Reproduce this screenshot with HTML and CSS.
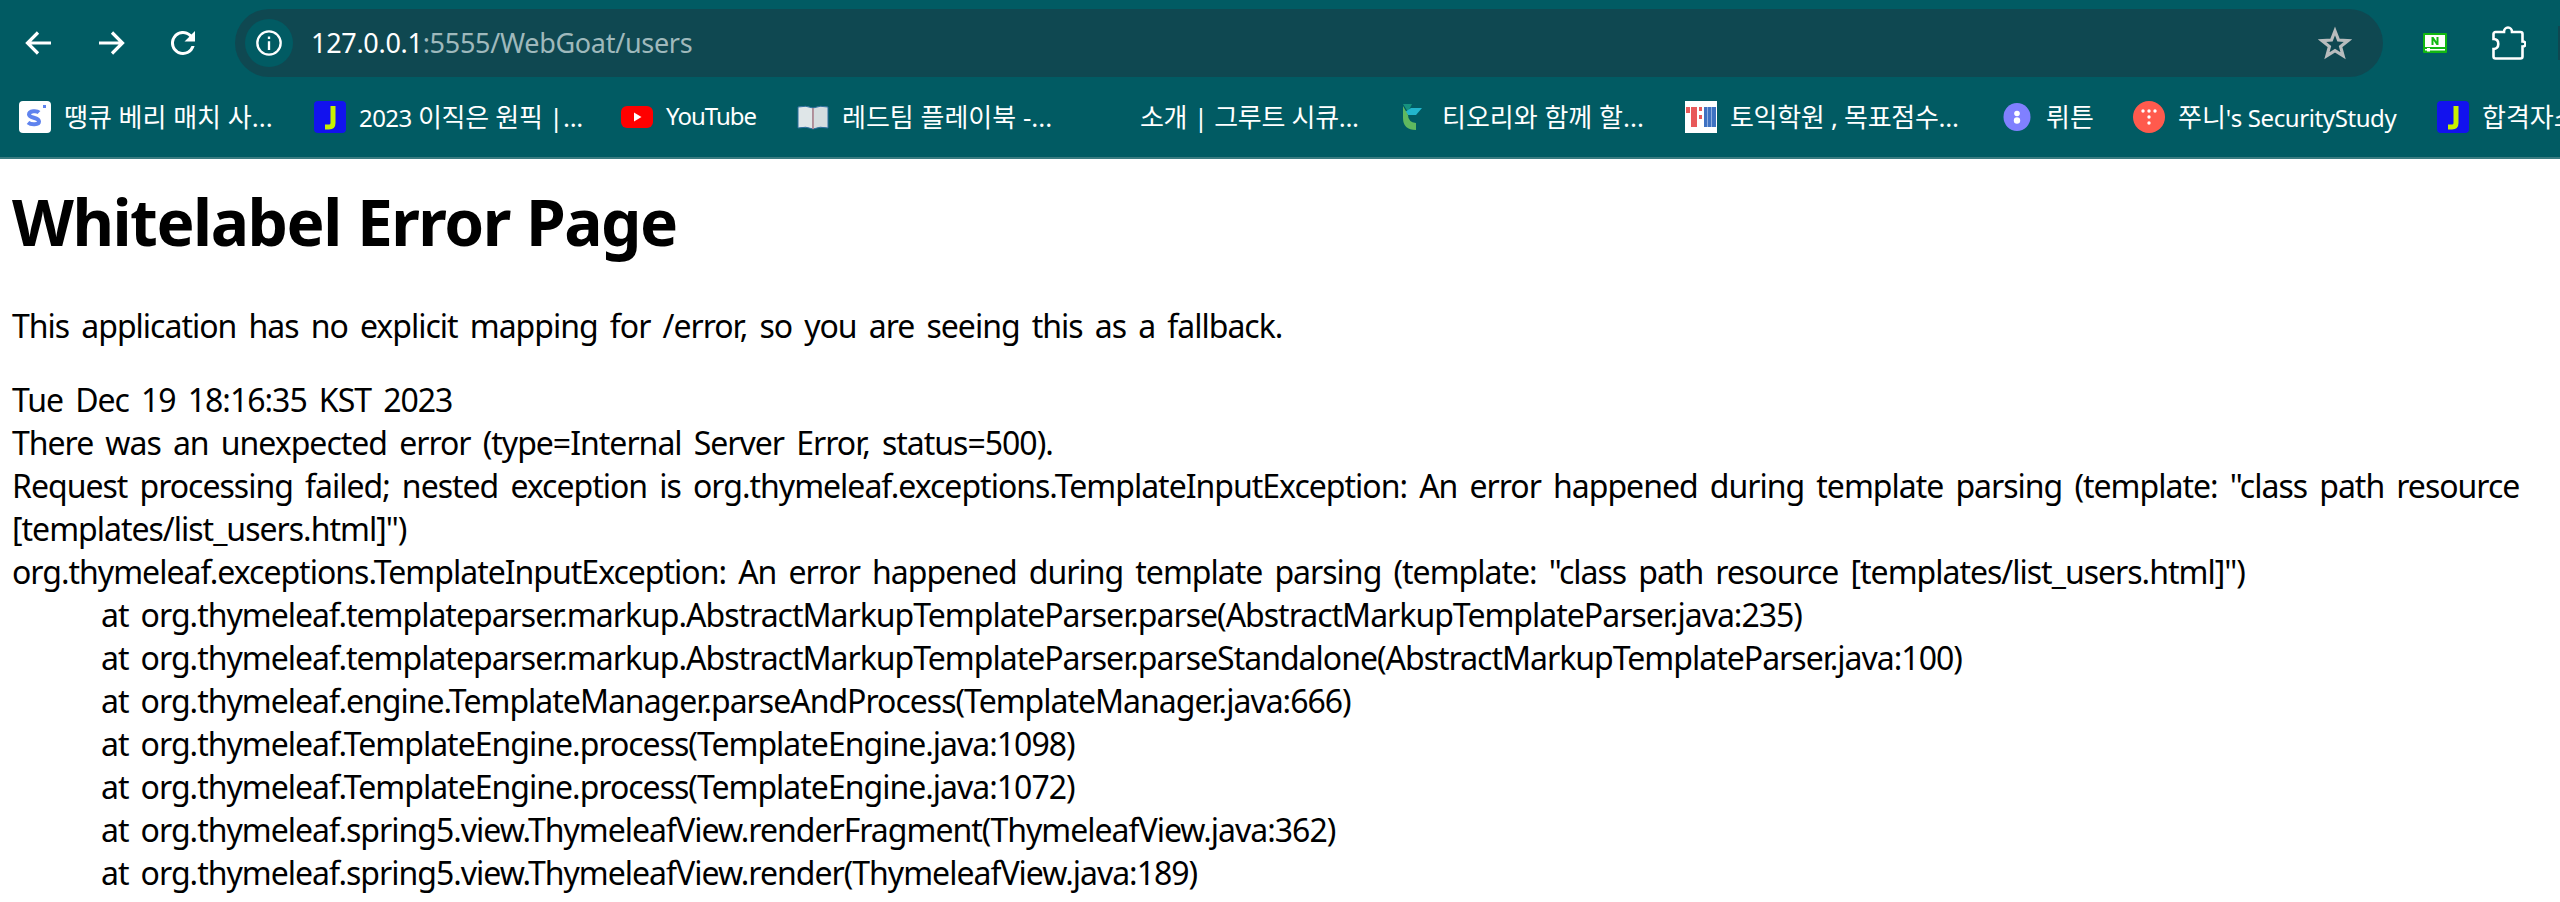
FILE: index.html
```html
<!DOCTYPE html>
<html lang="ko">
<head>
<meta charset="utf-8">
<title>WebGoat users</title>
<link rel="stylesheet" href="styles.css">
</head>
<body>
<header class="chrome">
  <div class="toolbar">
    <div class="nav">
      <svg class="nav-icon" viewBox="0 0 36 36"><path d="M30 18H7M17 7.500L6.500 18 17 28.500" class="nav-stroke"/></svg>
      <svg class="nav-icon" viewBox="0 0 36 36"><path d="M6 18h23M19 7.500L29.500 18 19 28.500" class="nav-stroke"/></svg>
      <svg class="nav-icon reload" viewBox="0 0 24 24"><path d="M17.65 6.350A8 8 0 1 0 19.730 14h-2.080A6 6 0 1 1 12 6c1.660 0 3.140.69 4.220 1.780L13 11h7V4z"/></svg>
    </div>
    <div class="omnibox">
      <span class="site-info"><svg viewBox="0 0 24 24" class="info-icon"><circle cx="12" cy="12" r="10" fill="none" stroke="#fff" stroke-width="2"/><path d="M11 10.500h2V18h-2zM11 6.500h2v2h-2z" fill="#fff"/></svg></span>
      <span class="url"><span class="host">127.0.0.1</span>:5555/WebGoat/users</span>
      <svg class="star" viewBox="0 0 34 34"><path d="M17 5l3.500 9 9.500.6-7.400 6 2.500 9.200L17 24.700l-8.100 5.100 2.500-9.200-7.400-6 9.500-.6z" fill="none" stroke="#b8bcbd" stroke-width="3.200"/></svg>
    </div>
    <svg class="ext-naver" viewBox="0 0 24 20"><rect width="24" height="20" rx="1" fill="#12b812"/><rect x="2" y="2" width="20" height="12" fill="#fff"/><path d="M8.500 12V4h2l3 4.500V4h2v8h-2l-3-4.500V12z" fill="#12b812"/><rect x="2" y="16" width="20" height="1.500" fill="#fff"/><rect x="4" y="15" width="3" height="3.500" fill="#fff"/></svg>
    <svg class="ext-puzzle" viewBox="0 0 34 34"><path d="M3.500 32.500a2 2 0 0 1-2-2v-7.500c3 0 4.800-2 4.800-5S4.500 13 1.500 13V8a2 2 0 0 1 2-2h8.500c0-2.600 1.800-4.500 4-4.500s4 1.900 4 4.500h8.500a2 2 0 0 1 2 2v7.500c2 0 3 1 3 2.500s-1 2.500-3 2.500v10a2 2 0 0 1-2 2z" fill="none" stroke="#fff" stroke-width="2.600"/></svg>
    <span class="avatar-edge"></span>
  </div>
  <nav class="bookmarks">
    <a class="bm"><svg class="fav" viewBox="0 0 32 32"><rect width="32" height="32" rx="4" fill="#fff"/><path d="M20 11.500c-2-2-10-2-10 2 0 4 10 2.500 10 7 0 3.500-8 3.500-11 1" fill="none" stroke="#5f83ee" stroke-width="4"/><rect x="24" y="4" width="3" height="3" fill="#5f83ee"/></svg><span class="label">땡큐 베리 매치 사...</span></a>
    <a class="bm"><svg class="fav" viewBox="0 0 32 32"><rect width="32" height="32" rx="4" fill="#1212ee"/><path d="M19 5v17q0 4-4 4h-4" fill="none" stroke="#c8f000" stroke-width="5"/></svg><span class="label tight"><span class="digits">2023</span> 이직은 원픽 |...</span></a>
    <a class="bm"><svg class="fav" viewBox="0 0 32 32"><rect y="5" width="32" height="22" rx="6" fill="#f00"/><path d="M13 11.500l7.500 4.500-7.500 4.500z" fill="#fff"/></svg><span class="label latin">YouTube</span></a>
    <a class="bm"><svg class="fav" viewBox="0 0 32 32"><path d="M1 6q8-2 15 1v21q-7-3-15-1z" fill="#dfe6e8" stroke="#2d6f9e"/><path d="M31 6q-8-2-15 1v21q7-3 15-1z" fill="#d4dcdf" stroke="#2d6f9e"/><path d="M16 7v21" stroke="#c78e92" stroke-width="1.500"/></svg><span class="label">레드팀 플레이북 -...</span></a>
    <a class="bm"><span class="fav"></span><span class="label tight">소개 | 그루트 시큐...</span></a>
    <a class="bm"><svg class="fav" viewBox="0 0 32 32"><path d="M6 3l9 0 -4 8z" fill="#16927f"/><path d="M8 11l6-4h11l-6 7h-8z" fill="#22b5cc"/><path d="M6 5l5 9q0 7 8 8v7q-13 0-13-12z" fill="#5fb85f"/></svg><span class="label">티오리와 함께 할...</span></a>
    <a class="bm"><svg class="fav" viewBox="0 0 32 32"><rect width="32" height="32" fill="#fff"/><path d="M1 6h4v6H1zM6 6h6v20H6zM14 6h3v4h-3zM14 14h3v4h-3z" fill="#e8595a"/><path d="M19 6h12v20H19z" fill="#3f72c2"/><path d="M22 6h1v20h-1zM26 6h1v20h-1z" fill="#8faee0"/></svg><span class="label tight">토익학원 , 목표점수...</span></a>
    <a class="bm"><svg class="fav" viewBox="0 0 32 32"><ellipse cx="16" cy="16" rx="13.500" ry="14" fill="#8080ff"/><circle cx="16" cy="12.500" r="2.800" fill="#fff"/><circle cx="16" cy="19.500" r="3.200" fill="#fff"/></svg><span class="label">뤼튼</span></a>
    <a class="bm"><svg class="fav" viewBox="0 0 32 32"><circle cx="16" cy="16" r="16" fill="#ff5a4d"/><g fill="#fff"><circle cx="10" cy="10" r="1.700"/><circle cx="16" cy="10" r="1.700"/><circle cx="22" cy="10" r="1.700"/><circle cx="16" cy="16" r="1.700"/><circle cx="16" cy="22" r="1.700"/></g></svg><span class="label">쭈니<span class="latin-tail">'s SecurityStudy</span></span></a>
    <a class="bm"><svg class="fav" viewBox="0 0 32 32"><rect width="32" height="32" rx="4" fill="#1212ee"/><path d="M19 5v17q0 4-4 4h-4" fill="none" stroke="#c8f000" stroke-width="5"/></svg><span class="label">합격자소서</span></a>
  </nav>
</header>
<main class="page">
  <h1>Whitelabel Error Page</h1>
  <p>This application has no explicit mapping for /error, so you are seeing this as a fallback.</p>
  <div>Tue Dec 19 18:16:35 KST 2023</div>
  <div>There was an unexpected error (type=Internal Server Error, status=500).</div>
  <div>Request processing failed; nested exception is org.thymeleaf.exceptions.TemplateInputException: An error happened during template parsing (template: "class path resource<br>[templates/list_users.html]")</div>
  <div>org.thymeleaf.exceptions.TemplateInputException: An error happened during template parsing (template: "class path resource [templates/list_users.html]")</div>
  <div class="frame">at org.thymeleaf.templateparser.markup.AbstractMarkupTemplateParser.parse(AbstractMarkupTemplateParser.java:235)</div>
  <div class="frame">at org.thymeleaf.templateparser.markup.AbstractMarkupTemplateParser.parseStandalone(AbstractMarkupTemplateParser.java:100)</div>
  <div class="frame">at org.thymeleaf.engine.TemplateManager.parseAndProcess(TemplateManager.java:666)</div>
  <div class="frame">at org.thymeleaf.TemplateEngine.process(TemplateEngine.java:1098)</div>
  <div class="frame">at org.thymeleaf.TemplateEngine.process(TemplateEngine.java:1072)</div>
  <div class="frame">at org.thymeleaf.spring5.view.ThymeleafView.renderFragment(ThymeleafView.java:362)</div>
  <div class="frame">at org.thymeleaf.spring5.view.ThymeleafView.render(ThymeleafView.java:189)</div>
</main>
</body>
</html>
```
FILE: styles.css
```css
html, body {
  margin: 0;
  height: 100%;
  overflow: hidden;
  background: #fff;
}
body {
  font-family: "Noto Sans", "Noto Sans CJK KR", sans-serif;
  color: #000;
}
.chrome {
  background: #015b63;
  height: 159px;
  border-bottom: 2px solid #3a7b80;
  box-sizing: border-box;
  overflow: hidden;
}
.toolbar {
  display: flex;
  align-items: center;
  height: 85px;
  padding-left: 21px;
}
.nav {
  display: flex;
  gap: 36px;
  width: 214px;
  flex: none;
}
.nav-icon {
  width: 36px;
  height: 36px;
  fill: #fff;
}
.nav-stroke {
  fill: none;
  stroke: #fff;
  stroke-width: 3.200;
}
.omnibox {
  display: flex;
  align-items: center;
  flex: none;
  width: 2148px;
  height: 68px;
  border-radius: 34px;
  background: #0f4851;
  box-sizing: border-box;
  padding: 0 31px 0 10px;
}
.site-info {
  display: flex;
  width: 48px;
  height: 48px;
  border-radius: 24px;
  align-items: center;
  justify-content: center;
  background: #015b63;
}
.info-icon {
  width: 28px;
  height: 28px;
}
.url {
  flex: 1;
  margin-left: 18px;
  font-size: 27px;
  letter-spacing: -0.3px;
  color: #9fb9bc;
}
.host {
  color: #fff;
}
.star {
  width: 34px;
  height: 34px;
}
.ext-naver {
  width: 24px;
  height: 20px;
  flex: none;
  margin-left: 40px;
}
.ext-puzzle {
  width: 34px;
  height: 34px;
  flex: none;
  margin-left: 45px;
}
.avatar-edge {
  width: 2px;
  height: 34px;
  flex: none;
  margin-left: 32px;
  background: #0f4851;
}
.bookmarks {
  display: grid;
  grid-template-columns: 295px 307px 176px 298px 302px 288px 316px 132px 304px 200px;
  align-items: center;
  height: 64px;
  padding-left: 19px;
  white-space: nowrap;
  font-size: 26px;
  color: #fff;
}
.bm {
  display: flex;
  align-items: center;
  gap: 13px;
}
.label {
  margin-top: -3px;
}
.tight {
  letter-spacing: -0.300px;
}
.latin {
  font-size: 24px;
  letter-spacing: -1px;
}
.latin-tail {
  font-size: 24px;
  letter-spacing: -0.400px;
}
.digits {
  font-size: 24px;
  letter-spacing: -0.600px;
}
.fav {
  width: 32px;
  height: 32px;
  flex: none;
}
.page {
  padding: 12px 12px 0;
  font-size: 32px;
  line-height: 43px;
  letter-spacing: -1px;
  word-spacing: 4.800px;
}
h1 {
  margin: 0;
  font-size: 64px;
  line-height: 85px;
  font-weight: 700;
  letter-spacing: -1.500px;
  word-spacing: 1px;
  padding-top: 8px;
}
p {
  margin: 0;
  padding: 40px 0 31px;
}
.frame {
  padding-left: 89px;
  letter-spacing: -1px;
}
```
